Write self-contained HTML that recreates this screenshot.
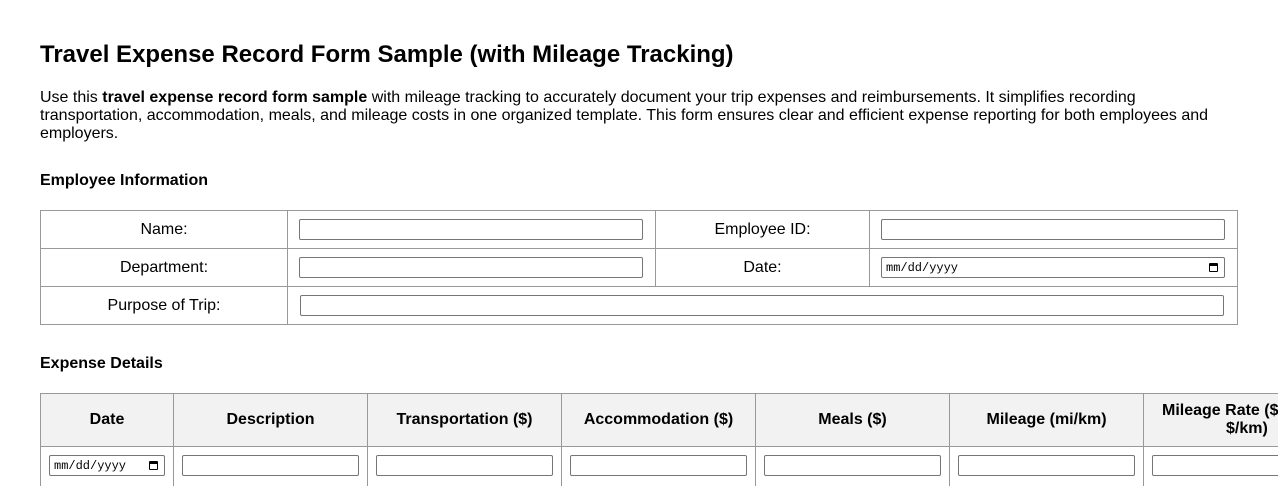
<!DOCTYPE html>
<html><head><style>
html,body{margin:0;width:1278px;height:486px;overflow:hidden}
body{background:#fff;font-family:"Liberation Sans",Arial,sans-serif;color:#000;position:relative}
.a{position:absolute}
.cell{position:absolute;border:1px solid #999;box-sizing:border-box;display:flex;align-items:center;justify-content:center;font-size:16px}
.hd{background:#f2f2f2;font-weight:bold;text-align:center;line-height:18px}
.in{position:absolute;border:1px solid #767676;border-radius:2px;box-sizing:border-box;background:#fff}
.dt{font-family:"Liberation Mono",monospace;font-size:12px;display:flex;align-items:center;padding-left:4px}
.cal{position:absolute;right:6px;top:5px;width:9px;height:9px;border:1.5px solid #000;border-top-width:3px;border-radius:1px;box-sizing:border-box}
</style></head><body>
<div class="a" style="left:40px;top:41px;font-size:24px;font-weight:bold">Travel Expense Record Form Sample (with Mileage Tracking)</div>
<div class="a" style="left:40px;top:89px;width:1200px;font-size:16px;line-height:18px">Use this <b>travel expense record form sample</b> with mileage tracking to accurately document your trip expenses and reimbursements. It simplifies recording transportation, accommodation, meals, and mileage costs in one organized template. This form ensures clear and efficient expense reporting for both employees and employers.</div>
<div class="a" style="left:40px;top:172px;font-size:16px;font-weight:bold">Employee Information</div>

<div class="cell" style="left:40px;top:210px;width:248px;height:39px">Name:</div>
<div class="cell" style="left:287px;top:210px;width:369px;height:39px"></div>
<div class="cell" style="left:655px;top:210px;width:215px;height:39px">Employee ID:</div>
<div class="cell" style="left:869px;top:210px;width:369px;height:39px"></div>
<div class="cell" style="left:40px;top:248px;width:248px;height:39px">Department:</div>
<div class="cell" style="left:287px;top:248px;width:369px;height:39px"></div>
<div class="cell" style="left:655px;top:248px;width:215px;height:39px">Date:</div>
<div class="cell" style="left:869px;top:248px;width:369px;height:39px"></div>
<div class="cell" style="left:40px;top:286px;width:248px;height:39px">Purpose of Trip:</div>
<div class="cell" style="left:287px;top:286px;width:951px;height:39px"></div>
<div class="in" style="left:299px;top:219px;width:344px;height:21px"></div>
<div class="in" style="left:881px;top:219px;width:344px;height:21px"></div>
<div class="in" style="left:299px;top:257px;width:344px;height:21px"></div>
<div class="in dt" style="left:881px;top:257px;width:344px;height:21px">mm/dd/yyyy<span class="cal"></span></div>
<div class="in" style="left:300px;top:295px;width:924px;height:21px"></div>

<div class="a" style="left:40px;top:355px;font-size:16px;font-weight:bold">Expense Details</div>

<div class="cell hd" style="left:40px;top:393px;width:134px;height:54px">Date</div>
<div class="cell hd" style="left:173px;top:393px;width:195px;height:54px">Description</div>
<div class="cell hd" style="left:367px;top:393px;width:195px;height:54px">Transportation ($)</div>
<div class="cell hd" style="left:561px;top:393px;width:195px;height:54px">Accommodation ($)</div>
<div class="cell hd" style="left:755px;top:393px;width:195px;height:54px">Meals ($)</div>
<div class="cell hd" style="left:949px;top:393px;width:195px;height:54px">Mileage (mi/km)</div>
<div class="cell hd" style="left:1143px;top:393px;width:195px;height:54px;justify-content:flex-start;padding-left:18px;white-space:nowrap">Mileage Rate ($/<br>&nbsp;&nbsp;&nbsp;&nbsp;&nbsp;&nbsp;&nbsp;&nbsp;&nbsp;&nbsp;&nbsp;$/km)</div>
<div class="cell" style="left:40px;top:446px;width:134px;height:50px"></div>
<div class="cell" style="left:173px;top:446px;width:195px;height:50px"></div>
<div class="cell" style="left:367px;top:446px;width:195px;height:50px"></div>
<div class="cell" style="left:561px;top:446px;width:195px;height:50px"></div>
<div class="cell" style="left:755px;top:446px;width:195px;height:50px"></div>
<div class="cell" style="left:949px;top:446px;width:195px;height:50px"></div>
<div class="cell" style="left:1143px;top:446px;width:195px;height:50px"></div>
<div class="in dt" style="left:49px;top:455px;width:116px;height:21px">mm/dd/yyyy<span class="cal"></span></div>
<div class="in" style="left:182px;top:455px;width:177px;height:21px"></div>
<div class="in" style="left:376px;top:455px;width:177px;height:21px"></div>
<div class="in" style="left:570px;top:455px;width:177px;height:21px"></div>
<div class="in" style="left:764px;top:455px;width:177px;height:21px"></div>
<div class="in" style="left:958px;top:455px;width:177px;height:21px"></div>
<div class="in" style="left:1152px;top:455px;width:177px;height:21px"></div>
</body></html>
